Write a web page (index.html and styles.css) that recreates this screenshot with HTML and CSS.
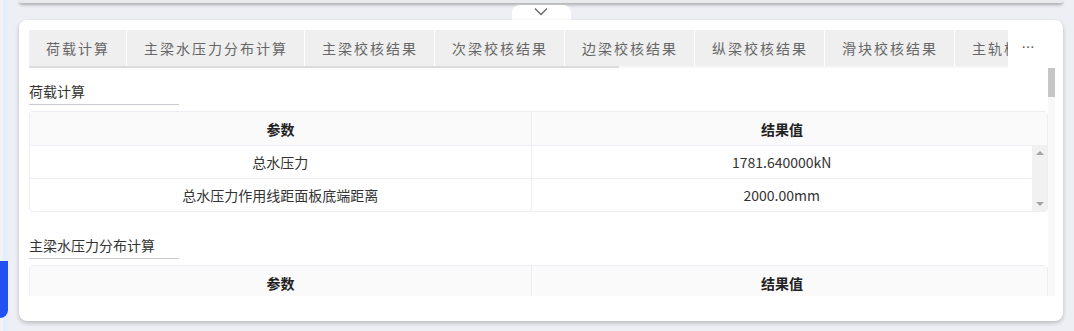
FILE: index.html
```html
<!DOCTYPE html>
<html>
  <head>
    <meta charset="utf-8">
    <title>计算结果</title>
    <link rel="stylesheet" href="styles.css">
  </head>
  <body>
    <div class="side">
      <div class="side-active"></div>
    </div>
    <div class="main">
      <div class="top-card"></div>
      <div class="toggle">
        <svg width="14" height="9" viewBox="0 0 14 9"><path d="M1 1.5 L7 7.5 L13 1.5" fill="none" stroke="#666" stroke-width="1.3"/></svg>
      </div>
      <div class="card">
        <div class="tabs-bar">
          <div class="tabs-scroll">
            <div class="tabs">
              <div class="tab">荷载计算</div>
              <div class="tab">主梁水压力分布计算</div>
              <div class="tab">主梁校核结果</div>
              <div class="tab">次梁校核结果</div>
              <div class="tab">边梁校核结果</div>
              <div class="tab">纵梁校核结果</div>
              <div class="tab">滑块校核结果</div>
              <div class="tab">主轨校核结果</div>
            </div>
            <div class="tabs-track"><div class="tabs-thumb"></div></div>
          </div>
          <div class="more">…</div>
        </div>

        <div class="content">
          <div class="content-inner">
            <div class="section">
              <div class="section-title">荷载计算</div>
              <div class="table">
                <div class="thead">
                  <div class="cell">参数</div>
                  <div class="cell cell-gutter">结果值</div>
                </div>
                <div class="tbody-wrap">
                  <div class="tbody">
                    <div class="row">
                      <div class="cell">总水压力</div>
                      <div class="cell">1781.640000kN</div>
                    </div>
                    <div class="row">
                      <div class="cell">总水压力作用线距面板底端距离</div>
                      <div class="cell">2000.00mm</div>
                    </div>
                  </div>
                  <div class="tscroll">
                    <span class="arrow-up"></span>
                    <span class="arrow-down"></span>
                  </div>
                </div>
              </div>
            </div>

            <div class="section">
              <div class="section-title">主梁水压力分布计算</div>
              <div class="table">
                <div class="thead">
                  <div class="cell">参数</div>
                  <div class="cell cell-gutter">结果值</div>
                </div>
              </div>
            </div>
          </div>
          <div class="vscroll"><div class="vthumb"></div></div>
        </div>
      </div>
    </div>
  </body>
</html>
```

FILE: styles.css
```css
* {
  box-sizing: border-box;
}
html, body {
  margin: 0;
  height: 100%;
}
body {
  display: flex;
  background-color: #eeeff4;
  font-family: "Noto Sans CJK SC", "Noto Sans", sans-serif;
  color: #333;
  overflow: hidden;
}
.side {
  width: 8px;
  flex-shrink: 0;
  background-color: #e7eefb;
  border-left: 3px solid #f1f3f8;
}
.side-active {
  margin-top: 261px;
  margin-left: -3px;
  width: 8px;
  height: 57px;
  background-color: #2350f3;
  border-radius: 0 0 8px 0;
}
.main {
  flex: 1;
  min-width: 0;
  display: flex;
  flex-direction: column;
  padding: 0 11px;
}
.top-card {
  height: 3px;
  background-color: #e9eaee;
  border-radius: 0 0 8px 8px;
  box-shadow: 0 2px 3px rgba(0, 0, 0, 0.3);
}
.toggle {
  align-self: center;
  width: 59px;
  height: 15px;
  margin-top: 2px;
  background-color: #fff;
  border-radius: 8px 8px 0 0;
  display: flex;
  justify-content: center;
  padding-top: 2px;
}
.card {
  height: 301px;
  background-color: #fff;
  border-radius: 8px;
  box-shadow: 0 2px 4px rgba(0, 0, 0, 0.22);
  padding: 10px 8px 25px 10px;
  display: flex;
  flex-direction: column;
  min-width: 0;
}
.tabs-bar {
  display: flex;
  margin-right: 7px;
  height: 38px;
  flex-shrink: 0;
}
.tabs-scroll {
  flex: 1;
  min-width: 0;
  overflow: hidden;
}
.tabs {
  display: flex;
  height: 36px;
}
.tab {
  flex-shrink: 0;
  padding: 0 16px 0 17px;
  line-height: 36px;
  font-size: 14px;
  letter-spacing: 2px;
  color: #666;
  background-color: #efefef;
  border-right: 1px solid #fff;
  white-space: nowrap;
}
.tabs-track {
  height: 2px;
  background-color: #f7f7f7;
}
.tabs-thumb {
  width: 590px;
  height: 2px;
  background-color: #dcdcdc;
}
.more {
  width: 40px;
  height: 36px;
  flex-shrink: 0;
  background-color: #fff;
  text-align: center;
  line-height: 34px;
  font-size: 13px;
  color: #555;
}
.content {
  flex: 1;
  display: flex;
  overflow: hidden;
}
.content-inner {
  flex: 1;
  min-width: 0;
  overflow: hidden;
}
.vscroll {
  width: 7px;
  flex-shrink: 0;
  background-color: #f8f8f8;
}
.vthumb {
  height: 29px;
  background-color: #c6c6c6;
}
.section {
  margin-bottom: 23px;
}
.section-title {
  width: 150px;
  margin-top: 13px;
  margin-bottom: 6px;
  padding-bottom: 3px;
  font-size: 14px;
  line-height: 20px;
  border-bottom: 1px solid #ccc;
}
.table {
  border: 1px solid #ebeef5;
  border-radius: 4px;
  font-size: 14px;
}
.thead {
  display: flex;
  height: 33px;
  background-color: #fafafa;
  font-weight: bold;
  color: #222;
}
.thead .cell {
  flex: 0 0 502px;
  border-right: 1px solid #ebeef5;
}
.thead .cell-gutter {
  flex: 1;
  padding-right: 15px;
  border-right: none;
}
.cell {
  display: flex;
  align-items: center;
  justify-content: center;
}
.tbody-wrap {
  display: flex;
}
.tbody {
  flex: 1;
}
.row {
  display: flex;
  height: 33px;
  border-top: 1px solid #ebeef5;
}
.row .cell {
  flex: 1;
  border-right: 1px solid #ebeef5;
}
.row .cell:last-child {
  border-right: none;
}
.tscroll {
  width: 15px;
  background-color: #f1f1f1;
  display: flex;
  flex-direction: column;
  justify-content: space-between;
  align-items: center;
  padding: 6px 0 5px;
}
.arrow-up {
  width: 0;
  height: 0;
  border-left: 4px solid transparent;
  border-right: 4px solid transparent;
  border-bottom: 4px solid #a3a3a3;
}
.arrow-down {
  width: 0;
  height: 0;
  border-left: 4px solid transparent;
  border-right: 4px solid transparent;
  border-top: 4px solid #a3a3a3;
}
```
